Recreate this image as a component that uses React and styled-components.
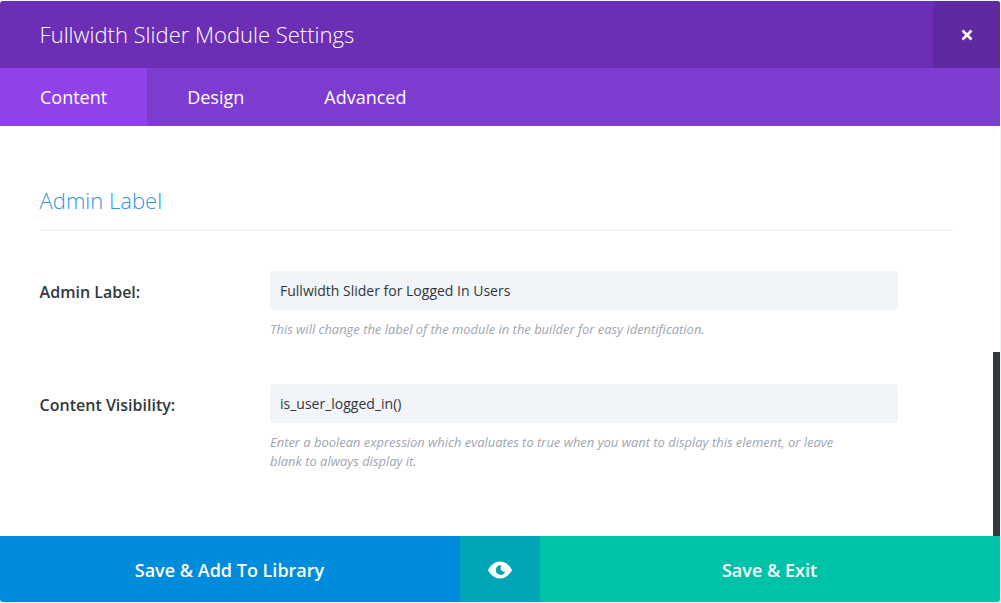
import React from 'react';
import styled, { createGlobalStyle } from 'styled-components';

const Global = createGlobalStyle`
  html, body { margin: 0; padding: 0; background: #eaf6f6; overflow: hidden; }
  * { box-sizing: border-box; }
`;

const Modal = styled.div`
  width: 1000px; height: 601px; margin-top: 1px;
  background: #fff; border-radius: 3px; overflow: hidden;
  display: flex; flex-direction: column; position: relative;
  font-family: "Open Sans", sans-serif;
`;
const Header = styled.header`
  height: 67px; flex: none; background: #6c2eb5; color: #fff;
  display: flex; align-items: center; justify-content: space-between;
`;
const Title = styled.h1`
  margin: 0 0 0 39.6px; font-size: 22px; font-weight: 300; line-height: 67px;
`;
const Close = styled.button`
  width: 67px; height: 67px; border: 0; padding: 0; background: #5f2aa1;
  display: flex; align-items: center; justify-content: center;
`;
const Tabs = styled.nav`
  height: 58px; flex: none; background: #7d3bcf; display: flex;
`;
const Tab = styled.div`
  padding: 0 40px; line-height: 58px; font-size: 18px; font-weight: 400; color: #fff;
  background: ${p => (p.$active ? '#8e42e8' : 'transparent')};
`;
const Body = styled.main`
  flex: 1; padding: 57px 47px 0 40px;
`;
const SectionTitle = styled.h2`
  margin: 0; padding-bottom: 12px; font-size: 22px; font-weight: 300; line-height: 34px;
  color: #2e96e8; border-bottom: 2px solid #f1f4f8; text-indent: -0.4px;
`;
const Rows = styled.div`
  margin-top: 40px; display: flex; flex-direction: column; gap: 45px;
`;
const Row = styled.div`display: flex;`;
const Label = styled.label`
  width: 230px; flex: none; font-size: 16px; font-weight: 600; color: #32373c;
  line-height: 42px; text-indent: -0.4px;
`;
const Field = styled.div`width: 628px;`;
const Input = styled.div`
  height: 39px; background: #f1f4f8; border-radius: 3px; padding: 0 10px;
  font-size: 14px; line-height: 39px; color: #32373c;
`;
const Help = styled.p`
  margin: 10px 0 0; width: 590px; font-size: 12.95px; font-style: italic; line-height: 19px; color: #a0a5af;
`;
const Footer = styled.footer`
  height: 66px; flex: none; display: flex; color: #fff;
  font-size: 18px; font-weight: 600;
`;
const FooterButton = styled.div`
  flex: ${p => p.$w}px 0 0; display: flex; align-items: center; justify-content: center;
  background: ${p => p.$bg}; padding: 2px 1px 0 0;
`;
const Scrollbar = styled.div`
  position: absolute; right: 0; top: 351px; width: 7px; height: 184px; background: #30373d;
`;

export default function App() {
  return (
    <>
      <Global />
      <Modal>
        <Header>
          <Title>Fullwidth Slider Module Settings</Title>
          <Close aria-label="Close">
            <svg width="12" height="12" viewBox="0 0 12 12">
              <path d="M1.500 1.500L10.500 10.500M10.500 1.500L1.500 10.500" stroke="#fff" strokeWidth="2.6" />
            </svg>
          </Close>
        </Header>
        <Tabs>
          <Tab $active>Content</Tab>
          <Tab>Design</Tab>
          <Tab>Advanced</Tab>
        </Tabs>
        <Body>
          <SectionTitle>Admin Label</SectionTitle>
          <Rows>
            <Row>
              <Label>Admin Label:</Label>
              <Field>
                <Input>Fullwidth Slider for Logged In Users</Input>
                <Help>This will change the label of the module in the builder for easy identification.</Help>
              </Field>
            </Row>
            <Row>
              <Label>Content Visibility:</Label>
              <Field>
                <Input>is_user_logged_in()</Input>
                <Help>Enter a boolean expression which evaluates to true when you want to display this element, or leave blank to always display it.</Help>
              </Field>
            </Row>
          </Rows>
        </Body>
        <Footer>
          <FooterButton $w={460} $bg="#008bdb">Save &amp; Add To Library</FooterButton>
          <FooterButton $w={80} $bg="#00a5b8">
            <svg width="26" height="18" viewBox="0 0 26 18">
              <path fillRule="evenodd" fill="#fff" d="M13 .5C19 .5 23 5 25 9c-2 4-6 8.500-12 8.500S3 13 1 9C3 5 7 .5 13 .5ZM14.500 4.500a4.700 4.700 0 1 0 3.500 6.200a3.800 3.800 0 0 1-3.500-6.200Z" />
            </svg>
          </FooterButton>
          <FooterButton $w={460} $bg="#00c2a8">Save &amp; Exit</FooterButton>
        </Footer>
        <Scrollbar />
      </Modal>
    </>
  );
}
